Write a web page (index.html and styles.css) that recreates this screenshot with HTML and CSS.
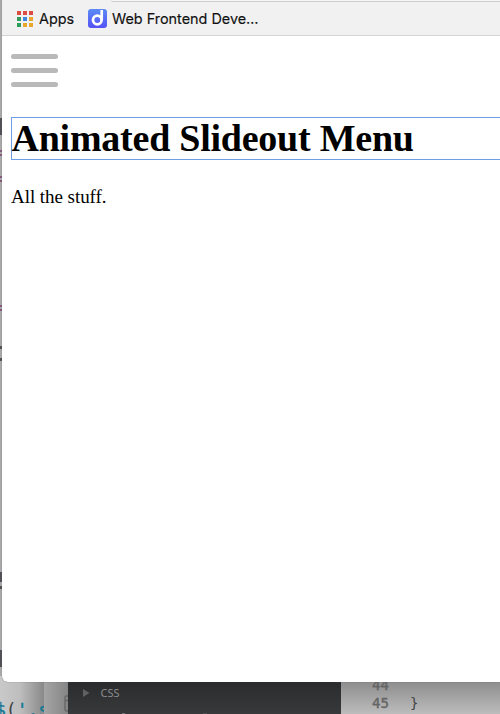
FILE: index.html
```html
<!DOCTYPE html>
<html lang="en">
<head>
<meta charset="utf-8">
<title>Animated Slideout Menu</title>
<link rel="stylesheet" href="styles.css">
</head>
<body>
<div class="desktop">
  <div class="editor-left"><code><span class="blue">$</span>(<span class="blue">'.s</span></code></div>
  <div class="editor-mid">
    <svg class="panel-icon" width="10" height="18" viewBox="0 0 10 18"><path d="M10 1H2.5Q1 1 1 2.5V14.500Q1 16 2.500 16H10M1 5.500H10M5 1V5" fill="none" stroke="#666" stroke-width="1.3"/></svg>
  </div>
  <div class="sidebar">
    <svg class="arrow" width="7" height="8" viewBox="0 0 7 8"><path d="M0 0L6.500 4L0 8Z" fill="#606163"/></svg>
    <span>CSS</span>
    <i class="tick tick-a"></i><i class="tick tick-b"></i>
  </div>
  <div class="editor-right">
    <div class="line"><b>44</b></div>
    <div class="line"><b>45</b><code>}</code></div>
  </div>
  <i class="mark mark-1"></i>
  <i class="mark plum mark-2"></i>
  <i class="mark plum mark-3"></i>
  <i class="mark plum mark-4"></i>
  <i class="mark mark-5"></i>
  <i class="mark mark-6"></i>
  <i class="mark mark-7"></i>
  <i class="mark mark-8"></i>
  <i class="mark mark-9"></i>

  <main class="browser">
    <header class="bookmarks">
      <svg class="apps-icon" width="16" height="16" viewBox="0 0 16 16">
        <g fill="#db4d43"><path d="M0 0h4v4H0zM6 0h4v4H6zM12 0h4v4h-4z"/></g>
        <g fill="#2f9c5c"><path d="M0 6h4v4H0zM0 12h4v4H0z"/></g>
        <path d="M6 6h4v4H6z" fill="#3f86df"/>
        <path d="M12 6h4v4h-4zM6 12h4v4H6zM12 12h4v4h-4z" fill="#e8a62e"/>
      </svg>
      <span class="apps-label">Apps</span>
      <svg class="site-icon" width="19" height="19" viewBox="0 0 19 19">
        <defs><linearGradient id="tile" x1="0" y1="0" x2="0" y2="1"><stop offset="0" stop-color="#5b8bf5"/><stop offset="1" stop-color="#5352f5"/></linearGradient></defs>
        <rect width="19" height="19" rx="3" fill="url(#tile)"/>
        <circle cx="9.300" cy="11" r="4.300" fill="none" stroke="#fff" stroke-width="2.700"/>
        <path d="M13.700 1V11" stroke="#fff" stroke-width="2.700"/>
      </svg>
      <span class="site-label">Web Frontend Deve…</span>
      <i class="tab-edge"></i>
    </header>
    <section class="page">
      <div class="burger"><i></i><i></i><i></i></div>
      <h1>Animated Slideout Menu</h1>
      <p>All the stuff.</p>
    </section>
  </main>
</div>
</body>
</html>
```
FILE: styles.css
```css
* { box-sizing: border-box; }
body { margin: 0; overflow: hidden; }
.desktop {
  position: relative;
  width: 500px;
  height: 714px;
  overflow: hidden;
  background: #a9a9a9;
}
.browser {
  position: absolute;
  left: 1.5px;
  top: 0;
  width: 520px;
  height: 682px;
  background: #fff;
  border-bottom-left-radius: 6px;
  box-shadow: 0 0 1px #555;
  overflow: hidden;
}
.bookmarks {
  position: relative;
  display: flex;
  align-items: center;
  height: 36px;
  padding: 2px 0 0 15.5px;
  background: #f1f1f1;
  border-bottom: 1px solid #d4d4d4;
  font: 14.4px/20px Inter, sans-serif;
  color: #111;
}
.tab-edge {
  position: absolute;
  left: 109.5px;
  top: 0;
  right: 0;
  height: 2px;
  background: #f6f6f6;
  border-bottom: 1px solid #cbcece;
  border-bottom-left-radius: 2px;
}
.apps-label { width: 35px; margin: 0 14px 0 6px; white-space: nowrap; }
.site-label { margin-left: 5px; white-space: nowrap; -webkit-text-stroke: .15px #111; }
.apps-label { -webkit-text-stroke: .15px #111; }
.page { padding: 18px 0 0 9.5px; font-family: "Liberation Serif", serif; color: #000; }
.burger { display: flex; flex-direction: column; gap: 9px; width: 47px; }
.burger i { height: 5px; border-radius: 2.5px; background: #b9b9b9; }
h1 {
  height: 43px;
  margin: 30px 0 0;
  border: 1px solid #6b9ee5;
  font-size: 38px;
  letter-spacing: -.24px;
  text-indent: -.5px;
  line-height: 41px;
  white-space: nowrap;
}
p { margin: 26px 0 0; font-size: 19px; letter-spacing: -.05px; line-height: 22px; }
.editor-left {
  position: absolute;
  left: 0;
  top: 676px;
  width: 44px;
  height: 38px;
  overflow: hidden;
  background: linear-gradient(90deg, #c9c9c9, #bebebe 45%, #898989);
}
.editor-left code {
  display: block;
  margin: 23px 0 0 -5px;
  font: 18px/22px "DejaVu Sans Mono", monospace;
  color: #444;
  white-space: nowrap;
}
.editor-left .blue { color: #187895; -webkit-text-stroke: .4px #187895; }
.editor-mid {
  position: absolute;
  left: 44px;
  top: 676px;
  width: 24px;
  height: 38px;
  padding: 19px 0 0 20px;
  background: linear-gradient(90deg, #a5a5a5, #858585);
}
.panel-icon { display: block; }
.sidebar {
  position: absolute;
  left: 68px;
  top: 676px;
  width: 273px;
  height: 38px;
  display: flex;
  align-items: center;
  gap: 10.5px;
  padding: 0 0 4px 15px;
  background: linear-gradient(#28292a, #38393b);
  color: #8c8d8f;
  font: 11px/16px "Noto Sans", sans-serif;
}
.tick { position: absolute; bottom: 0; height: 1px; background: #737476; }
.tick-a { left: 54px; width: 3px; }
.tick-b { left: 135px; width: 4px; opacity: .4; }
.editor-right {
  position: absolute;
  left: 341px;
  top: 676px;
  width: 159px;
  height: 38px;
  overflow: hidden;
  background: linear-gradient(#858585, #bcbcbc);
}
.line { display: flex; height: 18px; padding-left: 31px; color: #656565; }
.line b { width: 38px; font: 400 14px/19px "DejaVu Sans Mono", monospace; -webkit-text-stroke: .4px #656565; }
.line code { font: 14px/19px "DejaVu Sans Mono", monospace; color: #444; }
.mark { position: absolute; left: 0; width: 2px; background: #505156; }
.plum { height: 6px; background: linear-gradient(#86587a 2px, transparent 2px 4px, #86587a 4px); }
.mark-1 { top: 118px; height: 17px; }
.mark-2 { top: 150px; }
.mark-3 { top: 176px; }
.mark-4 { top: 305px; }
.mark-5 { top: 346px; height: 3px; }
.mark-6 { top: 358px; height: 3px; }
.mark-7 { top: 572px; height: 10px; }
.mark-8 { top: 586px; height: 3px; }
.mark-9 { top: 650px; height: 17px; }
```
